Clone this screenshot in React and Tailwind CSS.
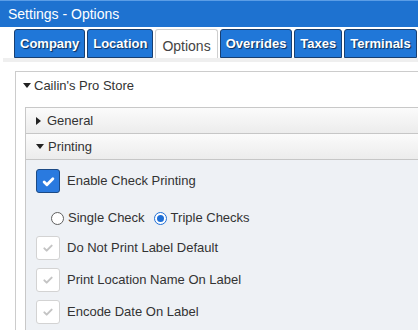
import React from "react";

const tabs = ["Company", "Location", "Options", "Overrides", "Taxes", "Terminals"];

const Check = ({ className, width = 3 }) => (
  <svg viewBox="0 0 24 24" className={className} fill="none">
    <path d="M6.5 12.5l3.5 3.5 7.5-7.5" stroke="currentColor" strokeWidth={width} strokeLinecap="round" strokeLinejoin="round" />
  </svg>
);

const Caret = ({ open }) =>
  open ? (
    <span className="inline-block w-0 h-0 border-l-[4px] border-r-[4px] border-t-[5px] border-l-transparent border-r-transparent border-t-[#222]" />
  ) : (
    <span className="inline-block w-0 h-0 border-t-[4px] border-b-[4px] border-l-[5px] border-t-transparent border-b-transparent border-l-[#222]" />
  );

const GreyBox = ({ label }) => (
  <div className="flex items-center gap-[7px] h-[24px]">
    <div className="w-[24px] h-[24px] bg-white border border-[#d3d3d3] rounded-[3px] flex items-center justify-center">
      <Check className="w-[16px] h-[16px] text-[#c4c4c4]" />
    </div>
    <span>{label}</span>
  </div>
);

export default function App() {
  return (
    <div className="w-[418px] h-[330px] overflow-hidden bg-white text-[13px] text-[#333] font-['Liberation_Sans',Arial,sans-serif]">
      {/* title bar */}
      <div className="h-[27px] bg-[#1e72d0] border-t border-[#5b9de6] flex items-center pl-[8px] text-white text-[14px]">
        Settings - Options
      </div>

      {/* tabs */}
      <div className="flex gap-[2px] pl-[14px] pt-[2px]">
        {tabs.map((t) =>
          t === "Options" ? (
            <div key={t} className="h-[29px] px-[6px] bg-white border border-b-0 border-[#cfcfcf] rounded-t-[3px] flex items-center pt-[5px] text-[14px] text-[#444]">
              {t}
            </div>
          ) : (
            <div
              key={t}
              className="h-[29px] px-[5px] bg-[#2077d8] border border-[#173f72] rounded-t-[3px] flex items-center font-bold text-white [text-shadow:1px_1px_1px_#0c2c57]"
            >
              {t}
            </div>
          )
        )}
      </div>
      <div className="h-[4px] ml-[3px] bg-[#efefef]" />

      {/* store panel */}
      <div className="mt-[9px] ml-[15px] border-l border-t border-[#cccccc]">
        <div className="h-[27px] flex items-center gap-[3px] pl-[7px]">
          <Caret open />
          <span>Cailin's Pro Store</span>
        </div>

        <div className="mt-[8px] ml-[9px] border-l border-t border-[#c8c8c8]">
          <div className="h-[26px] border-b border-[#c6c6c6] bg-gradient-to-b from-[#fbfbfb] to-[#ececec] flex items-center gap-[6px] pl-[10px]">
            <Caret />
            <span>General</span>
          </div>
          <div className="h-[26px] border-b border-[#c6c6c6] bg-gradient-to-b from-[#fbfbfb] to-[#ececec] flex items-center gap-[4px] pl-[10px]">
            <Caret open />
            <span>Printing</span>
          </div>

          <div className="bg-[#eef1f5] pl-[10px] pt-[9px] pb-[10px]">
            <div className="flex items-center gap-[7px] h-[24px]">
              <div className="w-[24px] h-[24px] bg-[#2a7adf] border border-[#1b4a85] rounded-[3px] flex items-center justify-center">
                <Check className="w-[19px] h-[19px] text-white" width={3.6} />
              </div>
              <span>Enable Check Printing</span>
            </div>

            <div className="flex items-center h-[14px] mt-[18px] pl-[15px]">
              <div className="w-[13px] h-[13px] rounded-full border border-[#5f5f5f] bg-white" />
              <span className="ml-[4px]">Single Check</span>
              <div className="ml-[9px] w-[13px] h-[13px] rounded-full border border-[#1f6fd6] bg-white flex items-center justify-center">
                <div className="w-[7px] h-[7px] rounded-full bg-[#1f6fd6]" />
              </div>
              <span className="ml-[4px]">Triple Checks</span>
            </div>

            <div className="flex flex-col gap-[8px] mt-[11px]">
              <GreyBox label="Do Not Print Label Default" />
              <GreyBox label="Print Location Name On Label" />
              <GreyBox label="Encode Date On Label" />
            </div>
          </div>
        </div>
      </div>
    </div>
  );
}
